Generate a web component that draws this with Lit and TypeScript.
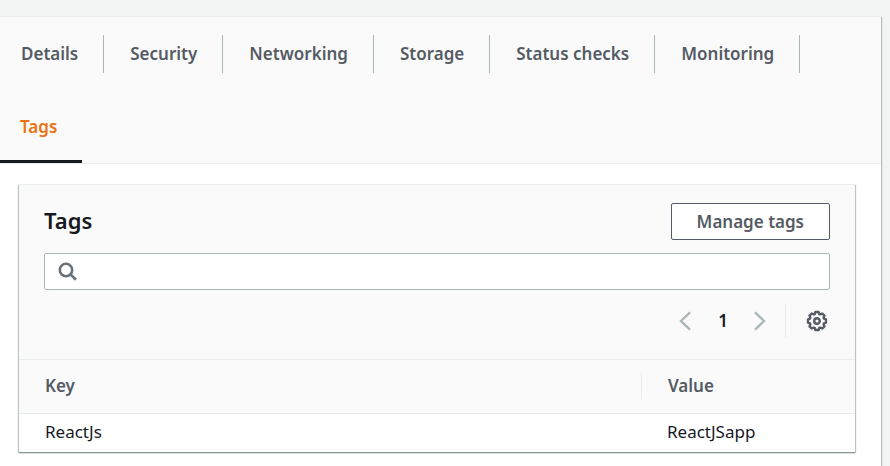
import { LitElement, html, css } from "lit";
import { customElement, property } from "lit/decorators.js";

const TABS = ["Details", "Security", "Networking", "Storage", "Status checks", "Monitoring", "Tags"];

const TAGS = [{ key: "ReactJs", value: "ReactJSapp" }];

@customElement("tab-bar")
class TabBar extends LitElement {
  @property() active = "Tags";

  static styles = css`
    :host {
      display: block;
      background: #fafafa;
      border-bottom: 1px solid #eaeded;
    }
    .tabs {
      display: flex;
      flex-wrap: wrap;
    }
    .tab {
      display: flex;
      align-items: center;
      height: 73px;
      padding: 0;
      border: 0;
      background: none;
      color: #545b64;
      font: 600 17px/22px "Noto Sans", sans-serif;
      cursor: pointer;
    }
    .label {
      padding: 8px 25px 8px 26px;
      border-right: 1px solid #aab7b8;
    }
    .tab:first-child .label {
      padding-left: 21px;
    }
    .active {
      color: #ec7211;
      box-shadow: inset 0 -3px #16191f;
    }
    .active .label {
      padding-left: 20px;
      border-right: 0;
    }
  `;

  render() {
    return html`
      <div class="tabs" role="tablist">
        ${TABS.map(
          (t) => html`<button
            class="tab ${t === this.active ? "active" : ""}"
            role="tab"
            aria-selected=${t === this.active}
          ><span class="label">${t}</span></button>`
        )}
      </div>
    `;
  }
}

@customElement("tags-card")
class TagsCard extends LitElement {
  static styles = css`
    :host {
      display: block;
      background: #fff;
      border-top: 1px solid #eaeded;
      box-shadow: 0 1px 1px 0 #879596, 1px 1px 1px 0 #c4cccc, -1px 1px 1px 0 #c4cccc;
      color: #16191f;
      font: 400 17px/22px "Noto Sans", sans-serif;
    }
    .head {
      display: grid;
      background: #fafafa;
      padding: 18px 25px 21px;
      gap: 13px;
      border-bottom: 1px solid #eaeded;
    }
    .title-row {
      display: flex;
      align-items: flex-start;
      justify-content: space-between;
    }
    h2 {
      margin: 0;
      font-size: 22px;
      font-weight: 600;
      line-height: 34px;
    }
    .manage {
      box-sizing: border-box;
      height: 37px;
      padding: 0 25px;
      border: 1px solid #545b64;
      border-radius: 2px;
      background: #fff;
      color: #545b64;
      font: 600 17px/22px "Noto Sans", sans-serif;
      cursor: pointer;
    }
    .search {
      display: flex;
      align-items: center;
      box-sizing: border-box;
      height: 37px;
      padding-left: 13px;
      border: 1px solid #aab7b8;
      border-radius: 2px;
      background: #fff;
    }
    .search input {
      flex: 1;
      min-width: 0;
      border: 0;
      outline: 0;
      padding: 0 12px;
      background: none;
      font: inherit;
    }
    svg {
      display: block;
      fill: none;
    }
    .tools {
      display: flex;
      align-items: center;
      justify-content: flex-end;
      height: 35px;
    }
    .icon,
    .page {
      display: flex;
      align-items: center;
      justify-content: center;
      padding: 0;
      border: 0;
      background: none;
      width: 24px;
      height: 24px;
      cursor: pointer;
    }
    .pages {
      display: flex;
      align-items: center;
      gap: 13px;
      padding-right: 13px;
    }
    .page {
      color: #16191f;
      font: 600 17px/22px "Noto Sans", sans-serif;
    }
    .settings {
      display: flex;
      align-items: center;
      height: 35px;
      padding: 0 1px 0 19px;
      border-left: 1px solid #eaeded;
    }
    table {
      width: 100%;
      border-collapse: separate;
      border-spacing: 0;
      table-layout: fixed;
    }
    .key-col {
      width: 74.4%;
    }
    th {
      height: 51px;
      padding: 0 0 2px;
      background: #fafafa;
      border-bottom: 1px solid #eaeded;
      color: #545b64;
      font-weight: 600;
      text-align: left;
    }
    .cell {
      display: block;
      padding: 2px 26px;
    }
    th + th .cell {
      border-left: 1px solid #eaeded;
    }
    td {
      height: 36px;
      padding: 0 26px 2px;
    }
  `;

  render() {
    return html`
      <div class="head">
        <div class="title-row">
          <h2>Tags</h2>
          <button class="manage">Manage tags</button>
        </div>
        <div class="search">
          <svg width="20" height="20" viewBox="0 0 20 20" stroke="#687078" stroke-width="2.6">
            <circle cx="8" cy="8" r="6.2" />
            <path d="M12.4 12.4L18 17.8" />
          </svg>
          <input type="search" aria-label="Find tags" />
        </div>
        <div class="tools">
          <div class="pages">
            <button class="icon" aria-label="Previous page">
              <svg width="24" height="24" viewBox="0 0 24 24" stroke="#aab7b8" stroke-width="2.4">
                <path d="M16 3.4L7 12l9 8.6" />
              </svg>
            </button>
            <button class="page" aria-current="page">1</button>
            <button class="icon" aria-label="Next page">
              <svg width="24" height="24" viewBox="0 0 24 24" stroke="#aab7b8" stroke-width="2.4">
                <path d="M7 3.4L16 12l-9 8.6" />
              </svg>
            </button>
          </div>
          <div class="settings">
            <button class="icon" aria-label="Preferences">
              <svg width="24" height="24" viewBox="0 0 24 24" stroke="#545b64" stroke-width="2.4" stroke-linejoin="round">
                <path
                  d="M10.4 3h3.2l.7 2 1.1.4 1.9-.9 2.2 2.2-.9 1.9.4 1.1 2 .7v3.2l-2 .7-.4 1.1.9 1.9-2.2 2.2-1.9-.9-1.1.4-.7 2h-3.2l-.7-2-1.1-.4-1.9.9-2.2-2.2.9-1.9-.4-1.1-2-.7v-3.2l2-.7.4-1.1-.9-1.9 2.2-2.2 1.9.9 1.1-.4z"
                />
                <circle cx="12" cy="12" r="2.8" />
              </svg>
            </button>
          </div>
        </div>
      </div>
      <table>
        <colgroup>
          <col class="key-col" />
          <col />
        </colgroup>
        <thead>
          <tr>
            <th scope="col"><span class="cell">Key</span></th>
            <th scope="col"><span class="cell">Value</span></th>
          </tr>
        </thead>
        <tbody>
          ${TAGS.map((t) => html`<tr><td>${t.key}</td><td>${t.value}</td></tr>`)}
        </tbody>
      </table>
    `;
  }
}

@customElement("app-root")
class AppRoot extends LitElement {
  static styles = css`
    :host {
      display: flex;
      box-sizing: border-box;
      min-height: 100vh;
      padding: 16px 9px 0 0;
      background: #f2f3f3;
    }
    .panel {
      flex: 1;
      min-width: 0;
      background: #fff;
      border-top: 1px solid #eaeded;
      box-shadow: 1px 1px 1px 0 #b4bcbc;
    }
    .body {
      padding: 20px 26px 14px 19px;
    }
  `;

  render() {
    return html`
      <main class="panel">
        <tab-bar active="Tags"></tab-bar>
        <div class="body"><tags-card></tags-card></div>
      </main>
    `;
  }
}
